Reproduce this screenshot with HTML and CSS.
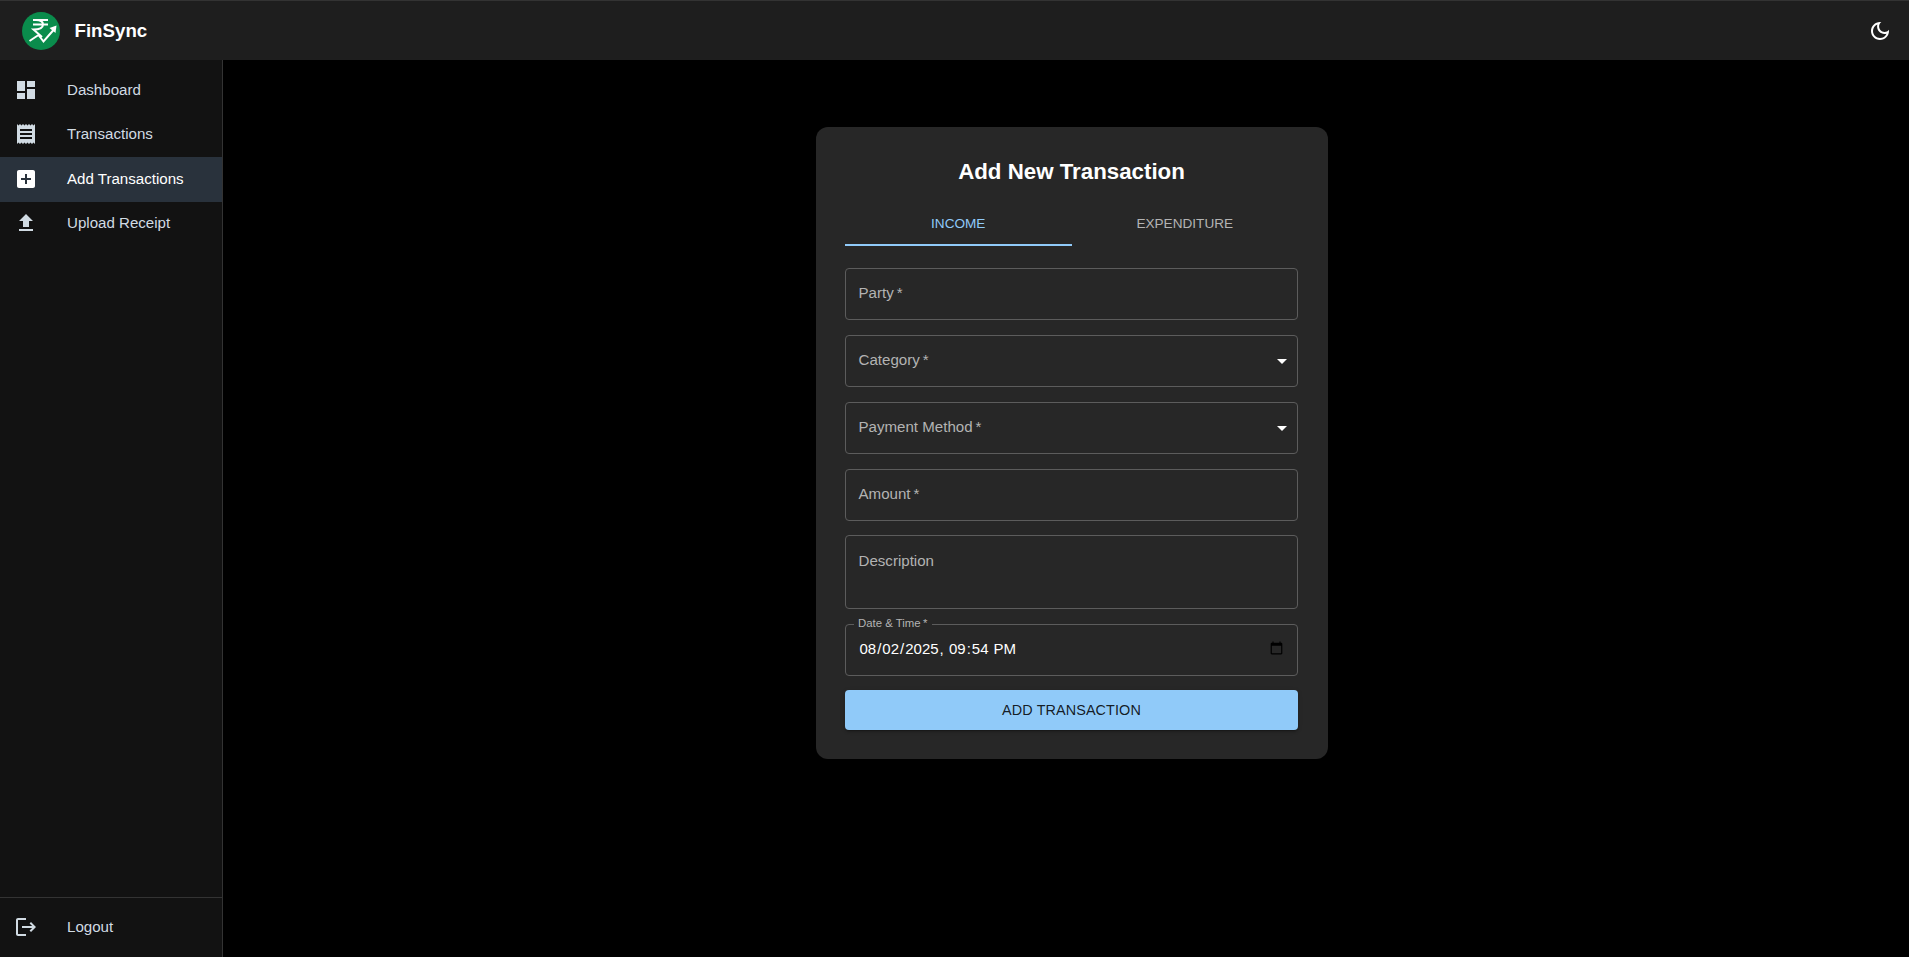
FILE: index.html
```html
<!doctype html>
<html>
<head>
<meta charset="utf-8">
<title>FinSync</title>
<link rel="stylesheet" href="styles.css">
</head>
<body>
<div class="app">
  <header class="topbar">
    <div class="brand">
      <svg class="logo" viewBox="0 0 38 38">
        <circle cx="19" cy="19" r="19" fill="#0a8c4c"/>
        <path d="M11 8h15M11 12.500h15M14 8c5 0 7 1.800 7 4.500s-3 5-9.500 5l8.500 7.500" fill="none" stroke="#fff" stroke-width="2"/>
        <path d="M7.500 29l9-6 5 6.500 10-11.500" fill="none" stroke="#fff" stroke-width="2"/>
        <path d="M27.500 16l7-2.500-1 7.500z" fill="#fff"/>
      </svg>
      <span class="brand-name">FinSync</span>
    </div>
    <button class="theme-btn" aria-label="Toggle theme">
      <svg viewBox="0 0 24 24"><path d="M9.37 5.51c-.18.64-.27 1.31-.27 1.99 0 4.08 3.32 7.4 7.4 7.4.68 0 1.35-.09 1.99-.27C17.45 17.19 14.93 19 12 19c-3.86 0-7-3.14-7-7 0-2.93 1.81-5.45 4.37-6.49zM12 3c-4.97 0-9 4.03-9 9s4.03 9 9 9 9-4.03 9-9c0-.46-.04-.92-.1-1.36-.98 1.37-2.58 2.26-4.4 2.26-2.98 0-5.4-2.42-5.4-5.4 0-1.81.89-3.42 2.26-4.4-.44-.06-.9-.1-1.36-.1z"/></svg>
    </button>
  </header>
  <div class="layout">
    <nav class="sidebar">
      <ul class="nav-list">
        <li class="nav-item">
          <svg viewBox="0 0 24 24"><path d="M3 13h8V3H3v10zm0 8h8v-6H3v6zm10 0h8V11h-8v10zm0-18v6h8V3h-8z"/></svg>
          <span>Dashboard</span>
        </li>
        <li class="nav-item">
          <svg viewBox="0 0 24 24"><path d="M18 17H6v-2h12v2zm0-4H6v-2h12v2zm0-4H6V7h12v2zM3 22l1.500-1.500L6 22l1.500-1.500L9 22l1.500-1.500L12 22l1.500-1.500L15 22l1.500-1.500L18 22l1.500-1.500L21 22V2l-1.500 1.500L18 2l-1.500 1.500L15 2l-1.500 1.500L12 2l-1.500 1.500L9 2 7.500 3.500 6 2 4.500 3.500 3 2v20z"/></svg>
          <span>Transactions</span>
        </li>
        <li class="nav-item active">
          <svg viewBox="0 0 24 24"><path d="M19 3H5c-1.110 0-2 .9-2 2v14c0 1.100.89 2 2 2h14c1.100 0 2-.9 2-2V5c0-1.100-.9-2-2-2zm-2 10h-4v4h-2v-4H7v-2h4V7h2v4h4v2z"/></svg>
          <span>Add Transactions</span>
        </li>
        <li class="nav-item">
          <svg viewBox="0 0 24 24"><path d="M5 20h14v-2H5v2zm0-10h4v6h6v-6h4l-7-7-7 7z"/></svg>
          <span>Upload Receipt</span>
        </li>
      </ul>
      <div class="sidebar-foot">
        <div class="nav-item">
          <svg viewBox="0 0 24 24"><path d="m17 7-1.410 1.410L18.170 11H8v2h10.170l-2.580 2.580L17 17l5-5zM4 5h8V3H4c-1.100 0-2 .9-2 2v14c0 1.100.9 2 2 2h8v-2H4V5z"/></svg>
          <span>Logout</span>
        </div>
      </div>
    </nav>
    <main class="main">
      <form class="card">
        <h2 class="card-title">Add New Transaction</h2>
        <div class="tabs">
          <div class="tab selected">INCOME</div>
          <div class="tab">EXPENDITURE</div>
        </div>
        <div class="field"><span class="field-label">Party&thinsp;*</span></div>
        <div class="field"><span class="field-label">Category&thinsp;*</span><span class="caret"></span></div>
        <div class="field"><span class="field-label">Payment Method&thinsp;*</span><span class="caret"></span></div>
        <div class="field"><span class="field-label">Amount&thinsp;*</span></div>
        <div class="field field-multi"><span class="field-label">Description</span></div>
        <div class="field field-date">
          <span class="float-label">Date &amp; Time&thinsp;*</span>
          <input class="date-input" type="datetime-local" value="2025-08-02T21:54">
        </div>
        <button class="submit" type="button">ADD TRANSACTION</button>
      </form>
    </main>
  </div>
</div>
</body>
</html>
```
FILE: styles.css
```css
* {
	box-sizing: border-box;
}
html, body {
	margin: 0;
	height: 100%;
}
body {
	background-color: #000;
	color: #fff;
	font-family: "Liberation Sans", Arial, sans-serif;
	overflow: hidden;
}
.app {
	display: flex;
	flex-direction: column;
	height: 100vh;
}

/* top bar */
.topbar {
	display: flex;
	align-items: center;
	justify-content: space-between;
	height: 60px;
	padding: 0 11px 0 22px;
	background-color: #1e1e1e;
	border-top: 1px solid #333;
	flex-shrink: 0;
}
.brand {
	display: flex;
	align-items: center;
	gap: 14.5px;
}
.logo {
	width: 38px;
	height: 38px;
}
.brand-name {
	font-size: 18.7px;
	font-weight: 700;
}
.theme-btn {
	display: flex;
	width: 36px;
	height: 36px;
	padding: 6px;
	border: 0;
	background: none;
}
.theme-btn svg {
	width: 24px;
	height: 24px;
	fill: #fff;
}

/* sidebar */
.layout {
	display: flex;
	flex: 1;
	min-height: 0;
}
.sidebar {
	display: flex;
	flex-direction: column;
	justify-content: space-between;
	width: 223px;
	flex-shrink: 0;
	background-color: #121212;
	border-right: 1px solid #333;
}
.nav-list {
	list-style: none;
	margin: 0;
	padding: 8px 0 0;
}
.nav-item {
	display: flex;
	align-items: center;
	height: 44.5px;
	padding-left: 14px;
	font-size: 15.1px;
	color: #d1dbe3;
}
.nav-item span {
	margin-bottom: 2px;
}
.nav-item svg {
	width: 24px;
	height: 24px;
	margin: 0 29px 1px 0;
	fill: #d1dbe3;
	flex-shrink: 0;
}
.nav-item.active {
	background-color: #29323c;
	color: #fff;
}
.nav-item.active svg {
	fill: #fff;
}
.sidebar-foot {
	height: 60px;
	padding-top: 7px;
	border-top: 1px solid #333;
}

/* form card */
.main {
	flex: 1;
	display: flex;
	justify-content: center;
	align-items: flex-start;
	padding: 67px 0 0 12px;
}
.card {
	display: flex;
	flex-direction: column;
	width: 512px;
	padding: 25px 30px 29px 29px;
	background-color: #272727;
	border-radius: 12px;
}
.card-title {
	margin: 0 0 8px;
	font-size: 22.3px;
	line-height: 40px;
	font-weight: 700;
	text-align: center;
}
.tabs {
	display: flex;
	margin-bottom: 22px;
}
.tab {
	flex: 1;
	height: 46px;
	padding-top: 14px;
	font-size: 13.6px;
	line-height: 20px;
	text-align: center;
	color: #b3b3b3;
	border-bottom: 2px solid transparent;
}
.tab.selected {
	color: #90caf9;
	border-bottom-color: #90caf9;
}
.field {
	position: relative;
	display: flex;
	align-items: flex-start;
	justify-content: space-between;
	height: 52px;
	margin-bottom: 15px;
	padding: 14px 12.5px 0;
	border: 1px solid #5c5c5c;
	border-radius: 4px;
}
.field-multi {
	height: 74px;
	margin-top: -1px;
	padding-top: 15px;
}
.field-label {
	font-size: 15.1px;
	line-height: 20px;
	color: #b3b3b3;
}
.caret {
	width: 0;
	height: 0;
	margin: 9px -2.5px 0 0;
	border-left: 5px solid transparent;
	border-right: 5px solid transparent;
	border-top: 5px solid #fff;
}
.float-label {
	position: absolute;
	top: -9px;
	left: 8px;
	padding: 0 5px 0 4px;
	font-size: 11.4px;
	line-height: 14px;
	color: #b3b3b3;
	background-color: #272727;
}
.field-date {
	margin-bottom: 14px;
	padding: 0;
}
.date-input {
	width: 100%;
	height: 100%;
	padding: 0 11px 3px 12.5px;
	border: 0;
	outline: 0;
	background: none;
	color: #fff;
	font-family: inherit;
	font-size: 15px;
}
.submit {
	height: 40px;
	border: 0;
	border-radius: 4px;
	background-color: #90caf9;
	color: rgba(0, 0, 0, 0.87);
	font-family: inherit;
	font-size: 14.4px;
	letter-spacing: 0.1px;
	box-shadow: 0 3px 1px -2px rgba(0,0,0,.2), 0 2px 2px rgba(0,0,0,.14), 0 1px 5px rgba(0,0,0,.12);
}
```
